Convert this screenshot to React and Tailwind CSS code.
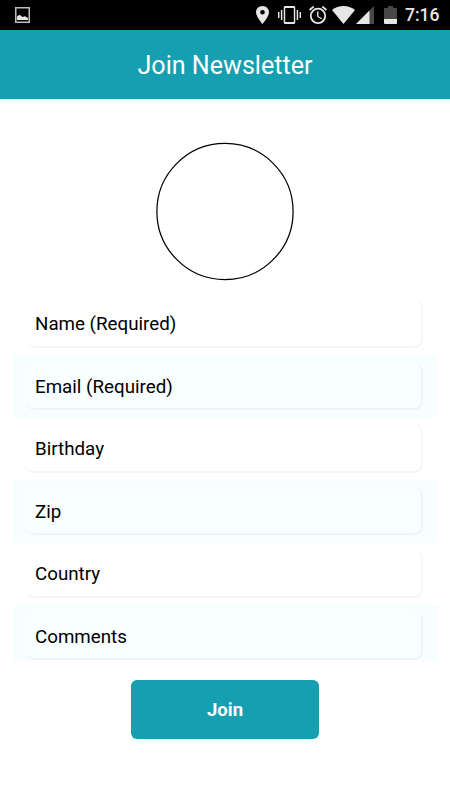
const fields = ['Name (Required)', 'Email (Required)', 'Birthday', 'Zip', 'Country', 'Comments'];

function StatusBar() {
  return (
    <div className="flex h-[30px] items-center justify-between bg-black pl-[15px] pr-[11px] text-[#e6e6e6]">
      <svg width="15" height="16" viewBox="0 0 15 16" fill="none">
        <rect x="0.75" y="0.75" width="13.5" height="14.500" stroke="#bdbdbd" strokeWidth="1.5" />
        <path d="M2 13V9.5L4.5 7.8L7.5 10L10 9.2L13 11V13Z" fill="currentColor" />
      </svg>
      <div className="flex h-full items-center">
        <svg className="mr-[9px]" width="13" height="18" viewBox="5 2 14 20" preserveAspectRatio="none" fill="currentColor">
          <path d="M12 2C8.13 2 5 5.13 5 9c0 5.25 7 13 7 13s7-7.75 7-13c0-3.87-3.13-7-7-7zm0 9.5a2.5 2.5 0 1 1 0-5 2.5 2.5 0 0 1 0 5z" />
        </svg>
        <svg className="mr-2" width="23" height="18" viewBox="0 0 24 18" preserveAspectRatio="none" fill="currentColor">
          <path d="M0 12h1.500V6H0v6zm3 2h1.500V4H3v10zM22.500 6v6H24V6h-1.500zm-3 8H21V4h-1.500v10zM16.500 0h-9C6.670 0 6 .67 6 1.500v15c0 .83.67 1.500 1.500 1.500h9c.83 0 1.500-.67 1.500-1.500v-15c0-.83-.67-1.500-1.500-1.500zM16.500 16h-9V2h9v14z" />
        </svg>
        <svg className="mr-[5px]" width="18" height="18" viewBox="2 2 20 20" fill="currentColor">
          <path d="M22 5.720l-4.600-3.860-1.290 1.530 4.600 3.860L22 5.720zM7.880 3.390L6.600 1.860 2 5.710l1.290 1.530 4.590-3.850zM12.500 8H11v6l4.750 2.850.75-1.230-4-2.370V8zM12 4a9 9 0 1 0 0 18 9 9 0 0 0 0-18zm0 16a7 7 0 1 1 0-14 7 7 0 0 1 0 14z" />
        </svg>
        <svg className="mr-px" width="23" height="18" viewBox="0 0 23 18" fill="currentColor">
          <path d="M0 4C6.500-1.300 16.500-1.300 23 4L11.500 18Z" />
        </svg>
        <svg className="mr-[10px]" width="18" height="18" viewBox="0 0 18 18">
          <path d="M0 18L18 0V18Z" fill="#484848" />
          <path d="M0 18L13.500 4.500V18Z" fill="currentColor" />
        </svg>
        <svg className="mr-[8px]" width="13" height="18" viewBox="0 0 13 18">
          <path d="M4 0h5v2h3q1 0 1 1v11H0V3q0-1 1-1h3Z" fill="#484848" />
          <path d="M0 13h13v4q0 1-1 1H1q-1 0-1-1Z" fill="currentColor" />
        </svg>
        <span className="w-[34px] whitespace-nowrap pt-[2px] text-[17.500px] font-medium leading-none">7:16</span>
      </div>
    </div>
  );
}

export default function App() {
  return (
    <div className="flex h-[800px] w-[450px] flex-col overflow-hidden bg-white font-['Roboto',sans-serif] text-black">
      <StatusBar />
      <header className="flex h-[68.500px] shrink-0 items-center justify-center bg-[#169fb1] pt-[4px] text-[25.100px] text-white">
        Join Newsletter
      </header>
      <main className="flex flex-col items-center">
        <svg className="mt-[44px] shrink-0 overflow-visible" width="138" height="137.500" viewBox="0 0 138 137.500" fill="none">
          <circle cx="69" cy="68.500" r="68.100" stroke="black" strokeWidth="1.25" />
        </svg>
        <div className="mt-[12.500px] h-[368.500px] w-[424px] shrink-0 overflow-hidden">
          {fields.map((label) => (
            <div key={label} className="h-[62.500px] pl-[13px] pr-[16px] pt-[7.500px] even:bg-[#f6feff]">
              <div className="flex h-[45.500px] items-center rounded-[7px] bg-white/30 pl-[9px] pt-[3px] text-[18.750px] shadow-[1px_1px_0px_1px_#00000009]">
                {label}
              </div>
            </div>
          ))}
        </div>
        <button className="mt-[19px] flex h-[58.500px] w-[188px] items-center justify-center rounded-[6px] bg-[#169fb1] pt-[4px] text-[18.500px] font-bold text-white">
          Join
        </button>
      </main>
    </div>
  );
}
